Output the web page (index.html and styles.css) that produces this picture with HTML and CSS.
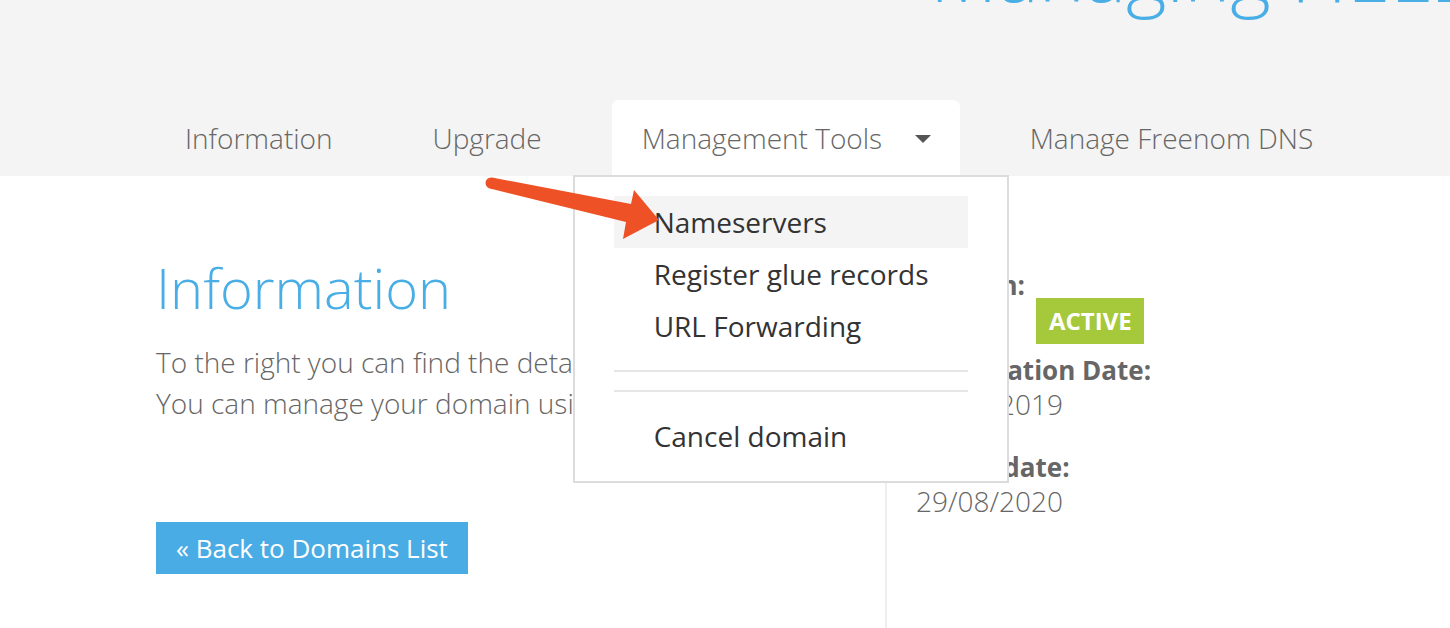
FILE: index.html
```html
<!DOCTYPE html>
<html lang="en">
<head>
<meta charset="utf-8">
<title>Managing domain</title>
<link rel="stylesheet" href="styles.css">
</head>
<body>
<header class="top">
  <div class="title-bar"><h1 class="page-title">Managing HELLOWORLD.TK</h1></div>
  <nav class="tabs">
    <a class="tab" href="#">Information</a>
    <a class="tab" href="#">Upgrade</a>
    <div class="tab tab-active">
      <span>Management Tools</span><span class="caret"></span>
      <ul class="dropdown">
        <li class="dd-item dd-hover">Nameservers</li>
        <li class="dd-item">Register glue records</li>
        <li class="dd-item">URL Forwarding</li>
        <li class="dd-divider"></li>
        <li class="dd-item">Cancel domain</li>
      </ul>
    </div>
    <a class="tab" href="#">Manage Freenom DNS</a>
  </nav>
</header>
<main class="content">
  <section class="main-col">
    <h2 class="section-title">Information</h2>
    <p class="intro">To the right you can find the details of your domain.<br>You can manage your domain using the tabs above.</p>
    <a class="back-btn" href="#">« Back to Domains List</a>
  </section>
  <aside class="side-col">
    <div class="label">Domain:</div>
    <div class="status-row"><span class="domain-name">site.tk</span><span class="badge">ACTIVE</span></div>
    <div class="label label-reg">Registration Date:</div>
    <div class="value">29/08/2019</div>
    <div class="label label-exp">Expiry date:</div>
    <div class="value">29/08/2020</div>
  </aside>
</main>
<svg class="annotation" width="1450" height="628" viewBox="0 0 1450 628">
  <circle cx="491" cy="183" r="5.5" fill="#ee5125"/>
  <polygon points="492,177.5 631,204 634,190 659,220 623,239 626,222 490,188.5" fill="#ee5125"/>
</svg>
</body>
</html>
```

FILE: styles.css
```css
* { box-sizing: border-box; }
html, body { margin: 0; padding: 0; }
body {
  font-family: "Open Sans", "Liberation Sans", sans-serif;
  background: #fff;
  color: #666;
  width: 1450px;
  height: 628px;
  overflow: hidden;
  position: relative;
}
.top { background: #f4f4f4; }
.title-bar { height: 100px; overflow: hidden; }
.page-title {
  margin: -67px 0 0 930px;
  font-size: 78px;
  line-height: 78px;
  font-weight: 300;
  color: #4aaee6;
  white-space: nowrap;
}
.tabs {
  display: flex;
  gap: 40px;
  padding-left: 155px;
  height: 76px;
}
.tab {
  display: flex;
  align-items: center;
  padding: 0 30px;
  height: 76px;
  font-size: 28px;
  font-weight: 300;
  color: #666;
  text-decoration: none;
  white-space: nowrap;
}
.tab-active {
  position: relative;
  background: #fff;
  border-radius: 7px 7px 0 0;
  width: 348px;
}
.caret {
  margin-left: 33px;
  width: 0; height: 0;
  border-left: 8px solid transparent;
  border-right: 8px solid transparent;
  border-top: 8px solid #555;
  margin-top: 2px;
}
.dropdown {
  position: absolute;
  top: 75px;
  left: -39px;
  width: 436px;
  margin: 0;
  padding: 19px 39px;
  list-style: none;
  background: #fff;
  border: 2px solid #dcdcdc;
  z-index: 5;
}
.dd-item {
  height: 52px;
  line-height: 52px;
  padding-left: 40px;
  font-size: 28px;
  font-weight: 400;
  color: #333;
}
.dd-hover { background: #f4f4f4; }
.dd-divider {
  height: 22px;
  margin: 18px 0;
  border-top: 2px solid #e6e6e6;
  border-bottom: 2px solid #e6e6e6;
}
.content {
  display: flex;
  padding-left: 156px;
  height: 452px;
}
.main-col { width: 729px; }
.section-title {
  margin: 80px 0 0;
  font-size: 56px;
  line-height: 62px;
  font-weight: 300;
  color: #4aaee6;
}
.intro {
  margin: 24px 0 0;
  font-size: 28px;
  line-height: 41px;
  font-weight: 300;
  color: #666;
}
.back-btn {
  display: inline-block;
  margin-top: 98px;
  height: 52px;
  line-height: 52px;
  padding: 0 20px;
  background: #4aace4;
  color: #fff;
  font-size: 26px;
  font-weight: 400;
  text-decoration: none;
}
.side-col {
  border-left: 2px solid #eeeeee;
  padding: 92px 0 0 29px;
  font-size: 26px;
  line-height: 34px;
  color: #666;
}
.label { font-weight: 700; }
.label-reg { margin-top: 9px; }
.label-exp { margin-top: 29px; }
.value { font-weight: 300; font-size: 28px; }
.status-row {
  display: flex;
  align-items: center;
  margin-top: -4px;
  height: 46px;
}
.domain-name { width: 120px; font-weight: 300; }
.badge {
  display: inline-block;
  height: 46px;
  line-height: 46px;
  padding: 0 12px 0 13px;
  background: #a6c93c;
  color: #fff;
  font-weight: 700;
  font-size: 24px;
}
.annotation {
  position: absolute;
  left: 0;
  top: 0;
  pointer-events: none;
  z-index: 10;
}
```
